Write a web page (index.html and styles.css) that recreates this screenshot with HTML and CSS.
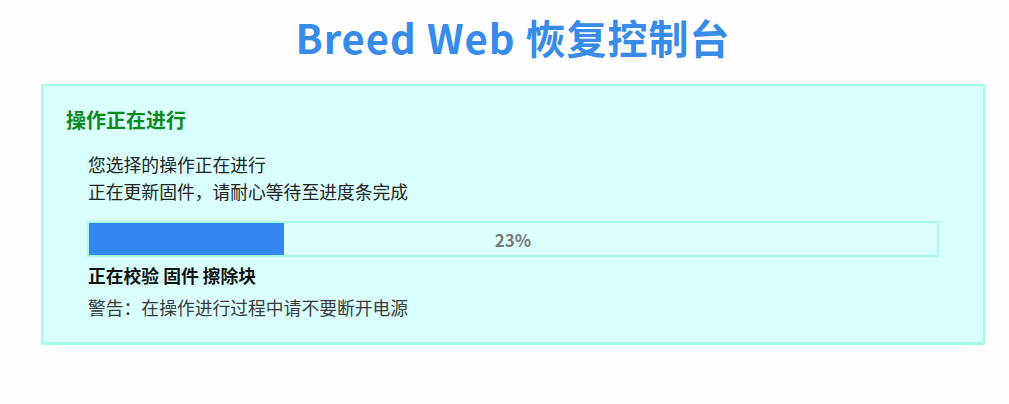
FILE: index.html
```html
<!DOCTYPE html>
<html lang="zh-CN">
<head>
<meta charset="utf-8">
<title>Breed Web 恢复控制台</title>
<link rel="stylesheet" href="styles.css">
</head>
<body>
<div class="page">
  <h1 class="title">Breed Web 恢复控制台</h1>
  <div class="panel">
    <h2 class="panel-title">操作正在进行</h2>
    <div class="panel-body">
      <p class="msg">您选择的操作正在进行</p>
      <p class="msg">正在更新固件，请耐心等待至进度条完成</p>
      <div class="progress">
        <div class="progress-fill" style="width: 23%"></div>
        <span class="progress-text">23%</span>
      </div>
      <p class="status">正在校验 固件 擦除块</p>
      <p class="warn">警告：在操作进行过程中请不要断开电源</p>
    </div>
  </div>
</div>
</body>
</html>
```

FILE: styles.css
```css
html, body {
  margin: 0;
  padding: 0;
  background: #fefefe;
}
body {
  font-family: "Noto Sans CJK SC", "Noto Sans", sans-serif;
  color: #333;
}
.page {
  margin-left: 41px;
  width: 944px;
}
.title {
  margin: 11px 0 21px;
  height: 52px;
  line-height: 52px;
  text-align: center;
  font-size: 40px;
  font-weight: 700;
  letter-spacing: 1px;
  color: #378be9;
}
.panel {
  background: #daffff;
  border: 2px solid #a3fde0;
  border-bottom-width: 3px;
  padding: 20px 23px 21px;
}
.panel-title {
  margin: 0;
  font-size: 20px;
  line-height: 28px;
  font-weight: 700;
  color: #0b8a1c;
}
.panel-body {
  padding-left: 21px;
  margin-top: 17px;
  padding-right: 21px;
}
.msg {
  margin: 0 0 0 1px;
  font-size: 17.8px;
  line-height: 27px;
  color: #222;
}
.progress {
  position: relative;
  margin-top: 16px;
  height: 32px;
  border: 2px solid #a3fde0;
  background: #dcffff;
  display: flex;
  align-items: center;
  justify-content: center;
}
.progress-fill {
  position: absolute;
  left: 0;
  top: 0;
  bottom: 0;
  background: #3386ef;
}
.progress-text {
  position: relative;
  font-size: 17px;
  font-weight: 700;
  color: #7a7a7a;
}
.status {
  margin: 5px 0 0 1px;
  font-size: 17.8px;
  line-height: 27px;
  font-weight: 700;
  color: #111;
}
.warn {
  margin: 5px 0 0 1px;
  font-size: 17.8px;
  line-height: 27px;
  color: #3a3a3a;
}
```
